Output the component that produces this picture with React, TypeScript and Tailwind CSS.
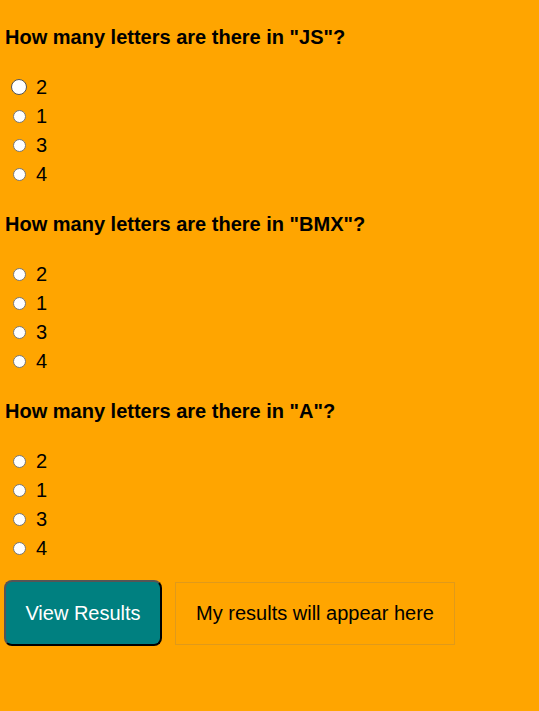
const questions = [
  { word: "JS", options: ["2", "1", "3", "4"] },
  { word: "BMX", options: ["2", "1", "3", "4"] },
  { word: "A", options: ["2", "1", "3", "4"] },
];

export default function App() {
  return (
    <div className="min-h-[711px] bg-[#ffa500] pl-[5px] pt-[26px] font-['Liberation_Sans',Arial,sans-serif] text-black">
      {questions.map((q, i) => (
        <div key={q.word} className="pb-[24.5px]">
          <h3 className="text-[20px] font-bold leading-[22px]">
            How many letters are there in "{q.word}"?
          </h3>
          <div className="mt-[24.5px]">
            {q.options.map((opt, j) => {
              const big = i === 0 && j === 0;
              return (
                <label key={j} className="flex h-[29px] items-center">
                  <span className="flex w-[27px] justify-center pl-[1px]">
                    <input
                      type="radio"
                      name={`q${i}`}
                      value={opt}
                      className={
                        big
                          ? "h-[16px] w-[16px] appearance-none rounded-full border-[1.5px] border-[#555] bg-white"
                          : "h-[13px] w-[13px] appearance-none rounded-full border border-[#777] bg-white"
                      }
                    />
                  </span>
                  <span className="ml-[4px] text-[20px]">{opt}</span>
                </label>
              );
            })}
          </div>
        </div>
      ))}
      <div className="-mt-[7px] flex items-center gap-[13px]">
        <button className="-ml-[1px] h-[66px] w-[158px] rounded-[8px] border-2 border-[#555] border-b-black border-r-black bg-[#008080] text-[20px] text-white">
          View Results
        </button>
        <div className="flex h-[63px] w-[280px] items-center justify-center border border-[#e09a1a] text-[20px]">
          My results will appear here
        </div>
      </div>
    </div>
  );
}
